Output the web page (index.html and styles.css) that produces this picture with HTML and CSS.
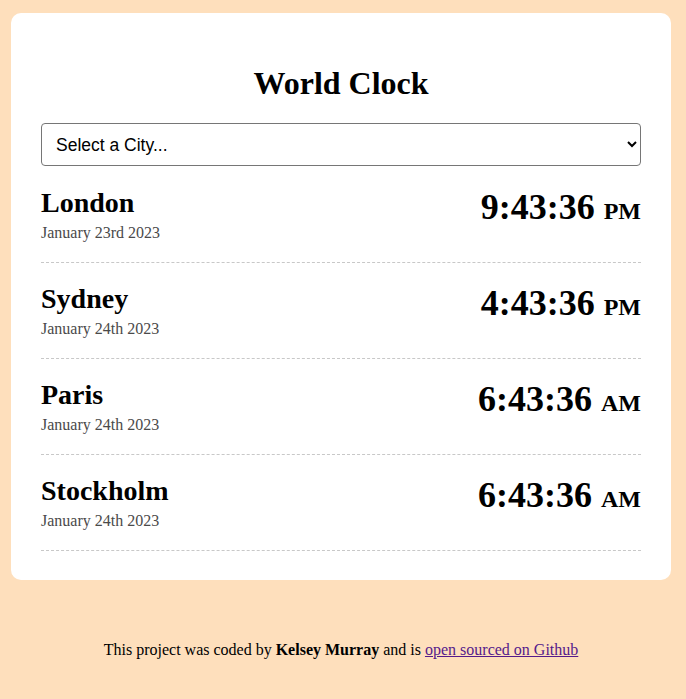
FILE: index.html
```html
<!DOCTYPE html>
<html lang="en">
<head>
<meta charset="utf-8">
<title>World Clock</title>
<link rel="stylesheet" href="styles.css">
</head>
<body>
<div class="page">
  <main class="card">
    <h1 class="title">World Clock</h1>
    <select class="city-select">
      <option>Select a City...</option>
      <option>London</option>
      <option>Sydney</option>
      <option>Paris</option>
      <option>Stockholm</option>
    </select>
    <div class="cities">
      <div class="city">
        <div>
          <h2 class="city-name">London</h2>
          <div class="date">January 23rd 2023</div>
        </div>
        <div class="time">9:43:36 <small class="ampm">PM</small></div>
      </div>
      <div class="city">
        <div>
          <h2 class="city-name">Sydney</h2>
          <div class="date">January 24th 2023</div>
        </div>
        <div class="time">4:43:36 <small class="ampm">PM</small></div>
      </div>
      <div class="city">
        <div>
          <h2 class="city-name">Paris</h2>
          <div class="date">January 24th 2023</div>
        </div>
        <div class="time">6:43:36 <small class="ampm">AM</small></div>
      </div>
      <div class="city">
        <div>
          <h2 class="city-name">Stockholm</h2>
          <div class="date">January 24th 2023</div>
        </div>
        <div class="time">6:43:36 <small class="ampm">AM</small></div>
      </div>
    </div>
  </main>
  <footer class="footer">
    This project was coded by <strong>Kelsey Murray</strong> and is <a class="link" href="#">open sourced on Github</a>
  </footer>
</div>
</body>
</html>
```

FILE: styles.css
```css
html, body {
  margin: 0;
  padding: 0;
}
body {
  background: #fedfbc;
  font-family: "Liberation Serif", "Times New Roman", serif;
  font-size: 16px;
  color: #000;
}
.page {
  width: 660px;
  margin: 13px 0 0 11px;
}
.card {
  background: #fff;
  border-radius: 10px;
  padding: 30px 30px 29px;
}
.title {
  font-size: 32px;
  font-weight: bold;
  text-align: center;
  margin: 22px 0 21px;
  line-height: 37px;
}
.city-select {
  display: block;
  width: 100%;
  height: 43px;
  box-sizing: border-box;
  margin: 0;
  padding: 0 8px 0 10px;
  border: 1px solid #767676;
  border-radius: 4px;
  background: #fff;
  color: #000;
  font-family: "Liberation Sans", Arial, sans-serif;
  font-size: 17.5px;
}
.city {
  display: flex;
  justify-content: space-between;
  align-items: flex-start;
  padding: 20px 0;
  border-bottom: 1px dashed #c8c8c8;
}
.city:first-child {
  padding-top: 21px;
}
.city-name {
  margin: 0;
  font-size: 28px;
  line-height: 32px;
  font-weight: bold;
}
.date {
  margin-top: 4px;
  font-size: 16px;
  line-height: 19px;
  color: #4a4a4a;
}
.time {
  font-size: 36px;
  font-weight: bold;
  line-height: 41px;
}
.ampm {
  font-size: 24px;
}
.footer {
  text-align: center;
  padding-top: 60px;
  line-height: 19px;
}
.link {
  color: #551a8b;
}
```
